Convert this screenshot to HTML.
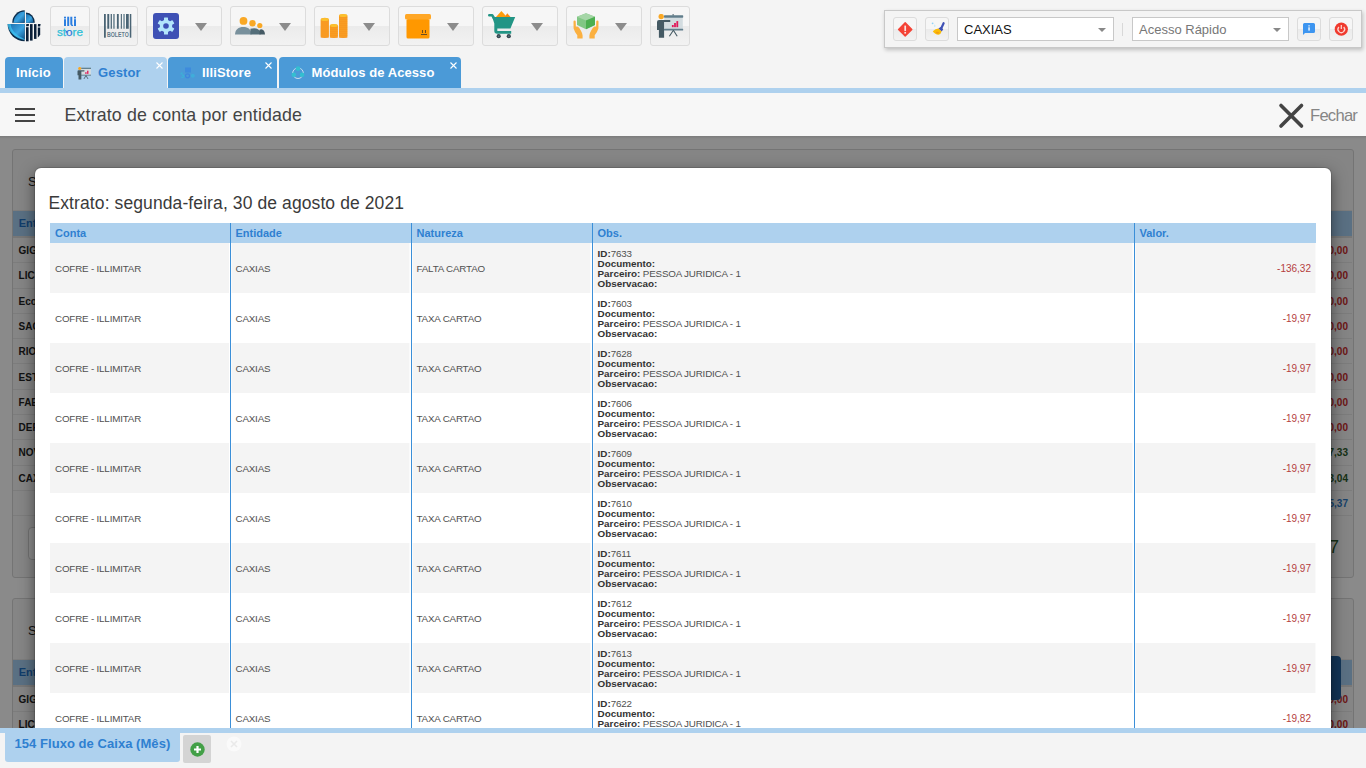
<!DOCTYPE html>
<html><head><meta charset="utf-8">
<style>
*{box-sizing:border-box;margin:0;padding:0}
html,body{width:1366px;height:768px;overflow:hidden;background:#f4f4f4;font-family:"Liberation Sans",sans-serif;position:relative}
.abs{position:absolute}
.btn{position:absolute;top:6px;height:39.5px;border:1px solid #dcdcdc;border-radius:3px;background:linear-gradient(#f6f6f6 0,#f6f6f6 19.5px,#ebebeb 19.5px,#f2f2f2 100%)}
.tri{position:absolute;top:15.5px;width:0;height:0;border-left:6px solid transparent;border-right:6px solid transparent;border-top:8px solid #8c8c8c}
.tab{position:absolute;top:57px;height:31px;border-radius:4px 4px 0 0;background:#4b9ad7;color:#fff;font-weight:bold;font-size:13px}
.tab span{position:absolute;top:8px;white-space:nowrap;letter-spacing:0.15px}
.tab .x{position:absolute;line-height:0}
#bar{position:absolute;left:0;top:88px;width:1366px;height:5px;background:#aed1ee}
#hdr{position:absolute;left:0;top:93px;width:1366px;height:43px;background:#f7f7f7}
#content{position:absolute;left:0;top:136px;width:1366px;height:592px;background:#fcfcfc;overflow:hidden}
#overlay{position:absolute;left:0;top:0;width:1366px;height:592px;background:rgba(0,0,0,.45)}
#modal{position:absolute;left:35px;top:32px;width:1296px;height:620px;background:#fff;border-radius:6px;box-shadow:0 0 0 1px rgba(0,0,0,.12),0 5px 15px rgba(0,0,0,.5)}
table{border-collapse:collapse;position:absolute;left:15px;top:55px;width:1266px;table-layout:fixed}
th{background:#aed1ee;color:#2f80d1;font-size:11px;font-weight:bold;text-align:left;height:20px;padding:0 5px;border-left:1px solid #3b8fd8}
th:first-child,td:first-child{border-left:none}
td{height:50px;font-size:9.8px;letter-spacing:-0.18px;color:#505050;padding:1px 5px 0 5px;border-left:1px solid #3b8fd8;vertical-align:middle;white-space:nowrap}
tbody tr:nth-child(odd) td{background:linear-gradient(to right,#fff 0,#fff 1px,#f4f4f4 1px,#f4f4f4 calc(100% - 1px),#fff calc(100% - 1px))}
tbody tr:nth-child(odd) td:first-child{background:linear-gradient(to right,#f4f4f4 0,#f4f4f4 calc(100% - 1px),#fff calc(100% - 1px))}
tbody tr:nth-child(odd) td:last-child{background:linear-gradient(to right,#fff 0,#fff 1px,#f4f4f4 1px)}
tbody tr:nth-child(even) td{background:#fff}
td.v{text-align:right;color:#b53e3e;font-size:10px;letter-spacing:0}
td.o{line-height:10px}
td.o b{font-weight:bold;font-size:9.9px;letter-spacing:0;color:#333}
#bot{position:absolute;left:0;top:728px;width:1366px;height:40px;background:#f4f4f4}
.sbtn{background:linear-gradient(#f6f6f6 0,#f6f6f6 11px,#ebebeb 11px,#f2f2f2 100%)!important}
</style></head><body>

<!-- logo -->
<svg class="abs" style="left:0;top:0" width="48" height="48" viewBox="0 0 48 48">
<defs><linearGradient id="lg" x1="0" y1="0" x2="1" y2="1"><stop offset="0" stop-color="#1c6fae"/><stop offset="0.55" stop-color="#3aa3e0"/><stop offset="1" stop-color="#0f4f86"/></linearGradient></defs>
<path d="M24.7 22.8 V10.2 A12.6 12.6 0 0 0 12.2 22.8 Z" fill="#0b2c4a"/>
<path d="M24.7 22.8 V11.6 A11.2 11.2 0 0 0 13.6 22.8 Z" fill="url(#lg)"/>
<path d="M26 22.8 V12.6 A8.8 10.2 0 0 1 34.8 22.8 Z" fill="#0b2c4a"/>
<path d="M26 22.8 V14 A7.6 8.8 0 0 1 33.5 22.8 Z" fill="url(#lg)"/>
<path d="M24.7 23.9 H7.6 A17.1 17.4 0 0 0 24.7 41.3 Z" fill="#0b2c4a"/>
<path d="M24.7 23.9 H9.6 A15.1 15.8 0 0 0 24.7 39.6 Z" fill="url(#lg)"/>
<path d="M7.6 23.9 H10.5 Q11 33 24.7 39.2 V40 Q9 36 7.6 23.9Z" fill="#3cc0f0" opacity="0.8"/>
<g fill="#0a1f38">
<path d="M26 27.2 H28.6 V41.3 H26Z"/><path d="M26.3 24.1 H29 L28.7 26.3 H26Z"/>
<path d="M30 24.1 H32.6 V40.6 H30Z"/>
<path d="M34 24.1 H36.5 V38.9 H34Z"/>
<path d="M37.8 27.6 H40.2 V34.5 Q39.1 36.6 37.8 37.4Z"/><path d="M38 24.1 H40.6 L40.2 26.5 H37.8Z"/>
</g>
</svg>

<!-- toolbar buttons -->
<div class="btn" style="left:50px;width:40px">
 <svg class="abs" style="left:-1px;top:-1px" width="40" height="39" viewBox="0 0 40 39">
  <g fill="#2d7fe0"><rect x="14" y="13.2" width="2" height="6.8"/><rect x="14" y="10.7" width="2" height="1.8"/><rect x="17.2" y="10.7" width="2" height="9.3"/><path d="M20.3 10.7 h2 v7.5 q0 0.8 0.8 0.8 v1 q-2.8 0-2.8-2.3z"/><rect x="24" y="13.2" width="2" height="6.8"/><rect x="24" y="10.7" width="2" height="1.8"/></g>
  <text x="20" y="29.6" font-family="Liberation Sans" font-size="11" fill="#2ec0d8" text-anchor="middle" textLength="26" lengthAdjust="spacingAndGlyphs" stroke="#2ec0d8" stroke-width="0.25">st<tspan fill="#2f78dc" stroke="#2f78dc">o</tspan>re</text>
  <circle cx="16.3" cy="25.8" r="0.9" fill="#2f6fd8"/>
 </svg>
</div>
<div class="btn" style="left:98px;width:40px">
 <svg class="abs" style="left:5px;top:7px" width="28" height="25" viewBox="0 0 28 25">
 <rect x="0" y="0" width="1.8" height="23.7" fill="#4a6474"/><rect x="25.8" y="0" width="1.5" height="23.7" fill="#4a6474"/><rect x="3.3" y="0" width="1.70" height="14.75" fill="#4a6474"/><rect x="5.4" y="0" width="1.00" height="14.75" fill="#a9bac3"/><rect x="6.8" y="0" width="1.10" height="14.75" fill="#4a6474"/><rect x="9.1" y="0" width="1.70" height="14.75" fill="#7c919c"/><rect x="12.9" y="0" width="1.85" height="14.75" fill="#4a6474"/><rect x="16.8" y="0" width="1.10" height="14.75" fill="#4a6474"/><rect x="19.1" y="0" width="1.90" height="14.75" fill="#8ea2ac"/><rect x="22" y="0" width="2.75" height="14.75" fill="#4a6474"/>
 <text x="3" y="22.7" font-family="Liberation Sans" font-weight="bold" font-size="6.4" fill="#60798a" textLength="21.7" lengthAdjust="spacingAndGlyphs">BOLETO</text>
 </svg>
</div>
<div class="btn" style="left:146px;width:76px">
 <svg class="abs" style="left:6px;top:6px" width="27" height="27" viewBox="0 0 27 27">
 <rect x="0" y="0" width="26" height="26" rx="3" fill="#3f51b5"/>
 <g transform="translate(13 13)" fill="#b3e5fc">
  <circle r="6.2"/>
  <rect x="-2" y="-8.5" width="4" height="17" rx="0.5"/>
  <rect x="-2" y="-8.5" width="4" height="17" rx="0.5" transform="rotate(60)"/>
  <rect x="-2" y="-8.5" width="4" height="17" rx="0.5" transform="rotate(120)"/>
  <circle r="2.8" fill="#3f51b5"/>
 </g>
 </svg>
 <div class="tri" style="left:48px"></div>
</div>
<div class="btn" style="left:230px;width:76px">
 <svg class="abs" style="left:4px;top:10px" width="32" height="19" viewBox="0 0 32 19">
  <circle cx="8.5" cy="3.9" r="3.9" fill="#f9a825"/>
  <circle cx="17.5" cy="6.2" r="3.2" fill="#f9a825"/>
  <circle cx="24.8" cy="8.5" r="2.6" fill="#f9a825"/>
  <path d="M0 17.6 C0 12.5 3.5 9.9 8.3 9.9 C13 9.9 16.3 12.3 16.6 17.6Z" fill="#78909c"/>
  <path d="M15.4 17.6 V11.8 Q17 11.2 19.2 11.2 Q23.6 11.4 25.6 15 V17.6Z" fill="#546e7a"/>
  <path d="M24.5 17.6 V12.8 Q25.5 12.3 26.3 12.3 Q29.6 12.6 30 17.6Z" fill="#455a64"/>
 </svg>
 <div class="tri" style="left:48px"></div>
</div>
<div class="btn" style="left:314px;width:76px">
 <svg class="abs" style="left:5px;top:6px" width="30" height="27" viewBox="0 0 30 27"><rect x="0.7" y="4.8" width="8.200000000000001" height="20.099999999999998" rx="4.1000000000000005" ry="1.6" fill="#fbab2a"/><path d="M0.7 8.0h8.2M0.7 10.0h8.2M0.7 12.0h8.2M0.7 14.0h8.2M0.7 16.0h8.2M0.7 18.0h8.2M0.7 20.0h8.2M0.7 22.0h8.2M0.7 24.0h8.2" stroke="#f5871a" stroke-width="0.9"/><ellipse cx="4.8" cy="6.4" rx="3.8000000000000007" ry="1.5" fill="#fbc02d"/><rect x="9.9" y="10.9" width="7.999999999999998" height="13.999999999999998" rx="3.999999999999999" ry="1.6" fill="#fbab2a"/><path d="M9.9 14.1h8.0M9.9 16.1h8.0M9.9 18.1h8.0M9.9 20.1h8.0M9.9 22.1h8.0M9.9 24.1h8.0" stroke="#f5871a" stroke-width="0.9"/><ellipse cx="13.899999999999999" cy="12.5" rx="3.6999999999999993" ry="1.5" fill="#fbc02d"/><rect x="19" y="0.9" width="8.399999999999999" height="24.0" rx="4.199999999999999" ry="1.6" fill="#fbab2a"/><path d="M19 4.1h8.4M19 6.1h8.4M19 8.1h8.4M19 10.1h8.4M19 12.1h8.4M19 14.1h8.4M19 16.1h8.4M19 18.1h8.4M19 20.1h8.4M19 22.1h8.4M19 24.1h8.4" stroke="#f5871a" stroke-width="0.9"/><ellipse cx="23.2" cy="2.5" rx="3.8999999999999995" ry="1.5" fill="#fbc02d"/></svg>
 <div class="tri" style="left:48px"></div>
</div>
<div class="btn" style="left:398px;width:76px">
 <svg class="abs" style="left:6px;top:7px" width="27" height="26" viewBox="0 0 27 26">
  <rect x="1.5" y="5" width="23" height="19.5" rx="1.5" fill="#ff9800"/>
  <rect x="0" y="0" width="26" height="5.5" rx="1.5" fill="#ffa726"/>
  <path d="M16 20.5h6M17.5 19v-3M20.5 19v-3" stroke="#6d4c1f" stroke-width="1"/>
 </svg>
 <div class="tri" style="left:48px"></div>
</div>
<div class="btn" style="left:482px;width:76px">
 <svg class="abs" style="left:5px;top:4px" width="29" height="29" viewBox="0 0 29 29">
  <path d="M8 5.95 L13.4 0 L17.3 4.3 L17.3 5.95Z" fill="#ff9d0a"/>
  <path d="M16.6 5.95 L19.3 2.3 L22.5 5.95Z" fill="#f98a0c"/>
  <path d="M1.3 4.3 H4.3 L6.2 7.5" stroke="#229585" stroke-width="2.6" stroke-linecap="round" stroke-linejoin="round" fill="none"/>
  <path d="M4.2 5.9 H27.2 L22.4 17.6 H9.3 V20 H23.2 V22.8 H9.3 Q6.3 22.8 6.3 20 V12.5 Z" fill="#229585"/>
  <circle cx="10.7" cy="25.2" r="2.1" fill="#37474f"/><circle cx="20.8" cy="25.2" r="2.1" fill="#37474f"/>
  <circle cx="10.7" cy="25.2" r="0.7" fill="#607d8b"/><circle cx="20.8" cy="25.2" r="0.7" fill="#607d8b"/>
 </svg>
 <div class="tri" style="left:48px"></div>
</div>
<div class="btn" style="left:566px;width:76px">
 <svg class="abs" style="left:6px;top:6px" width="27" height="27" viewBox="0 0 27 27">
  <path d="M13 0.3 L22 3.8 V12 L13 16.3 L4 12 V3.8Z" fill="#81c784"/>
  <path d="M13 0.3 L22 3.8 L13 7.5 L4 3.8Z" fill="#a5d6a7"/>
  <path d="M13 7.5 L22 3.8 V12 L13 16.3Z" fill="#4caf50"/>
  <path d="M0.5 8.5 Q0.5 7.5 1.6 7.5 Q2.7 7.5 2.7 8.5 L2.9 13.8 Q4 13 5 13.8 Q6.5 15 7.8 17.5 Q9.6 20.5 9.6 22.5 V25.6 H4.3 V22.2 Q1.5 18.8 0.6 15.5 Z" fill="#fbb040"/>
  <path d="M 25.50 8.5 Q 25.50 7.5 24.40 7.5 Q 23.30 7.5 23.30 8.5 L 23.10 13.8 Q 22.00 13 21.00 13.8 Q 19.50 15 18.20 17.5 Q 16.40 20.5 16.40 22.5 V 25.6 H 21.70 V 22.2 Q 24.50 18.8 25.40 15.5 Z" fill="#fbb040"/>
 </svg>
 <div class="tri" style="left:48px"></div>
</div>
<div class="btn" style="left:650px;width:40px">
 <svg class="abs" style="left:5px;top:7px" width="28" height="25" viewBox="0 0 28 25">
  <rect x="16.6" y="-0.2" width="1" height="2" fill="#455a64"/>
  <rect x="8.2" y="3.6" width="18.6" height="11.6" fill="#d3dce0"/>
  <rect x="8" y="1.3" width="19.2" height="2.4" rx="0.6" fill="#607d8b"/>
  <rect x="8" y="14.8" width="19.2" height="1.8" rx="0.6" fill="#607d8b"/>
  <path d="M17.4 16.3 L13.4 22.3 M17.4 16.3 L21.2 22.3" stroke="#455a64" stroke-width="1.1"/>
  <rect x="15.9" y="11" width="1.8" height="2.2" fill="#e0195a"/><rect x="18.1" y="9" width="1.8" height="4.2" fill="#e0195a"/><rect x="20.4" y="7.1" width="1.8" height="6.1" fill="#e0195a"/>
  <circle cx="5.2" cy="2.6" r="2.7" fill="#f9a825"/>
  <path d="M1 8 Q1 6 3 6 H14 Q15 7 14 8.1 H8.1 V23.8 H2.9 V16 H1Z" fill="#455a64"/>
 </svg>
</div>

<!-- right panel -->
<div class="abs" style="left:884px;top:10px;width:478px;height:38px;background:#f4f4f4;border:1px solid #c8c8c8;box-shadow:1px 2px 4px rgba(0,0,0,.22)">
 <div class="btn sbtn" style="left:8px;top:6px;width:23.5px;height:23.5px">
  <svg class="abs" style="left:3px;top:3px" width="16" height="16" viewBox="0 0 16 16"><path d="M8.2 1.8 L14.8 8.4 L8.2 15 L1.6 8.4Z" fill="#f44336" stroke="#f44336" stroke-width="1.4" stroke-linejoin="round"/><rect x="7.35" y="4.6" width="1.7" height="5.4" fill="#fbe3e1"/><rect x="7.35" y="10.9" width="1.7" height="1.7" fill="#fbe3e1"/></svg>
 </div>
 <div class="btn sbtn" style="left:40px;top:6px;width:23.5px;height:23.5px">
  <svg class="abs" style="left:3px;top:3px" width="16" height="16" viewBox="0 0 16 16"><path d="M14.6 2.2 L12.4 7" stroke="#3f51b5" stroke-width="2.2" stroke-linecap="round"/><path d="M9.3 7.6 L12.2 5.8 L14.2 8.4 L12.6 10.6 Z" fill="#3f51b5"/><path d="M3.8 10.2 Q6.5 8 9.3 7.6 L12.6 10.6 Q12 13 9.5 13.8 Q6 13.6 3.8 10.2Z" fill="#fbbc05"/><path d="M6.5 11 Q8.8 10 10.5 11.8 Q9.5 13 8 12.8Z" fill="#f39c12"/><circle cx="3.6" cy="2.3" r="0.9" fill="#8fd3f8"/><path d="M5.8 3.3 Q7.2 5.3 5.8 6.2 Q4.6 5.3 5.8 3.3Z" fill="#b3e5fc"/></svg>
 </div>
 <div class="abs" style="left:72px;top:6px;width:157px;height:24px;background:#fff;border:1px solid #c8c8c8">
  <span class="abs" style="left:6px;top:4px;font-size:13px;color:#111">CAXIAS</span>
  <div class="abs" style="left:140px;top:10px;border-left:4.5px solid transparent;border-right:4.5px solid transparent;border-top:4px solid #888"></div>
 </div>
 <div class="abs" style="left:237px;top:12px;width:1px;height:13px;background:#d8d8d8"></div>
 <div class="abs" style="left:247px;top:6px;width:157px;height:24px;background:#fff;border:1px solid #c8c8c8">
  <span class="abs" style="left:6px;top:4px;font-size:13px;color:#777">Acesso Rápido</span>
  <div class="abs" style="left:140px;top:10px;border-left:4.5px solid transparent;border-right:4.5px solid transparent;border-top:4px solid #888"></div>
 </div>
 <div class="btn sbtn" style="left:412px;top:6px;width:23.5px;height:23.5px">
  <svg class="abs" style="left:4px;top:4px" width="14" height="15" viewBox="0 0 14 15"><path d="M2.5 1 H11.5 Q13 1 13 2.5 V9.5 Q13 11 11.5 11 H3 L1 13 V2.5 Q1 1 2.5 1Z" fill="#3d95f0"/><rect x="6.2" y="5.3" width="1.7" height="3.3" fill="#d6e9fb"/><rect x="6.2" y="3" width="1.7" height="1.6" fill="#a9cff5"/></svg>
 </div>
 <div class="btn sbtn" style="left:444px;top:6px;width:23.5px;height:23.5px">
  <svg class="abs" style="left:3px;top:3px" width="16" height="16" viewBox="0 0 16 16"><circle cx="8.3" cy="8.2" r="6.6" fill="#f03a2e"/><path d="M5.9 6 A3.3 3.3 0 1 0 10.7 6" stroke="#fbd3cf" stroke-width="1.3" fill="none"/><rect x="7.65" y="4" width="1.3" height="4" fill="#fbd3cf"/></svg>
 </div>
</div>

<!-- tabs -->
<div class="tab" style="left:5px;width:58px"><span style="left:11px">Início</span></div>
<div class="tab" style="left:64px;width:103px;background:#aed1ee;color:#2f80d1">
 <svg class="abs" style="left:12.5px;top:9.5px" width="14.5" height="13" viewBox="0 0 28 25">
  <rect x="8.2" y="3.6" width="18.6" height="11.6" fill="#d3dce0"/>
  <rect x="8" y="1.3" width="19.2" height="2.4" fill="#607d8b"/>
  <rect x="8" y="14.8" width="19.2" height="1.8" fill="#607d8b"/>
  <path d="M17.4 16.3 L13.4 23 M17.4 16.3 L21.2 23" stroke="#455a64" stroke-width="1.6"/>
  <rect x="15.9" y="10" width="2.6" height="3.2" fill="#e0195a"/><rect x="19.5" y="7.1" width="2.6" height="6.1" fill="#e0195a"/>
  <circle cx="5.2" cy="2.9" r="3" fill="#f9a825"/>
  <path d="M1 8 Q1 6 3 6 H14 Q15 7 14 8.4 H8.4 V24 H2.9 V16 H1Z" fill="#455a64"/>
 </svg>
 <span style="left:34px">Gestor</span><div class="x" style="left:91.5px;top:4.6px"><svg width="7" height="7" viewBox="0 0 7 7"><path d="M0.5 0.5 L6.5 6.5 M6.5 0.5 L0.5 6.5" stroke="#fff" stroke-width="1.1"/></svg></div>
</div>
<div class="tab" style="left:168px;width:109px">
 <svg class="abs" style="left:12px;top:10px;opacity:.75" width="16" height="12" viewBox="0 0 16 12"><rect x="5" y="0.5" width="6" height="5" fill="#3a86e0"/><path d="M1 7.5 Q1 6 2.5 6 M1 10 Q3 11 4 9.5 Q4 8 2 8" stroke="#38b8d8" stroke-width="1.3" fill="none"/><circle cx="7.5" cy="8.8" r="2" fill="none" stroke="#3a80e0" stroke-width="1.2"/><circle cx="12.8" cy="8.8" r="2" fill="#3cb4dc"/></svg>
 <span style="left:34px">IlliStore</span><div class="x" style="left:97px;top:4.6px"><svg width="7" height="7" viewBox="0 0 7 7"><path d="M0.5 0.5 L6.5 6.5 M6.5 0.5 L0.5 6.5" stroke="#fff" stroke-width="1.1"/></svg></div>
</div>
<div class="tab" style="left:279px;width:182px">
 <svg class="abs" style="left:12px;top:9px" width="14" height="14" viewBox="0 0 14 14"><circle cx="7" cy="7.2" r="5.3" fill="none" stroke="#dfeaf3" stroke-width="1" opacity="0.85"/><circle cx="7" cy="2.6" r="2.3" fill="#33bfd0"/><circle cx="2.8" cy="8.7" r="2.3" fill="#33bfd0"/><circle cx="11.1" cy="8.7" r="2.3" fill="#33bfd0"/></svg>
 <span style="left:32.5px;letter-spacing:0.08px">Módulos de Acesso</span><div class="x" style="left:170.5px;top:5px"><svg width="7" height="7" viewBox="0 0 7 7"><path d="M0.5 0.5 L6.5 6.5 M6.5 0.5 L0.5 6.5" stroke="#fff" stroke-width="1.1"/></svg></div>
</div>

<div id="bar"></div>
<div id="hdr">
 <div class="abs" style="left:15px;top:15px;width:20px;height:2px;background:#444"></div>
 <div class="abs" style="left:15px;top:21px;width:20px;height:2px;background:#444"></div>
 <div class="abs" style="left:15px;top:27px;width:20px;height:2px;background:#444"></div>
 <div class="abs" style="left:64.5px;top:12px;font-size:17.8px;letter-spacing:0.15px;color:#444;white-space:nowrap">Extrato de conta por entidade</div>
 <svg class="abs" style="left:1278px;top:9px" width="27" height="27" viewBox="0 0 27 27"><path d="M3 3.5 L23.5 24 M23.5 3.5 L3 24" stroke="#444" stroke-width="3.6" stroke-linecap="round"/></svg>
 <div class="abs" style="left:1310px;top:13px;font-size:16.6px;letter-spacing:-0.75px;color:#858585;white-space:nowrap">Fechar</div>
</div>

<div id="content">
 <!-- bg start -->
<div class="abs" style="left:12px;top:13px;width:1342px;height:429px;background:#f3f3f3;border:1px solid #d4d4d4;border-radius:3px"></div>
<div class="abs" style="left:12px;top:462.20000000000005px;width:1342px;height:181.79999999999995px;background:#f3f3f3;border:1px solid #d4d4d4;border-radius:3px"></div>
<div class="abs" style="left:28px;top:39.20px;font-size:13px;line-height:1;color:#222;white-space:nowrap;">S</div>
<div class="abs" style="left:28px;top:488.00px;font-size:13px;line-height:1;color:#222;white-space:nowrap;">S</div>
<div class="abs" style="left:13px;top:74.00px;width:1339px;height:1.00px;background:#e4e4e4;"></div>
<div class="abs" style="left:13px;top:75.00px;width:1339px;height:25.00px;background:#a4cdef;"></div>
<div class="abs" style="left:13px;top:100.00px;width:1339px;height:1.50px;background:#d9d9d9;"></div>
<div class="abs" style="left:18.7px;top:81.59px;font-size:11px;line-height:1;font-weight:bold;color:#1f6fc4;white-space:nowrap;">Ent</div>
<div class="abs" style="left:13px;top:523.00px;width:1339px;height:1.00px;background:#e4e4e4;"></div>
<div class="abs" style="left:13px;top:524.00px;width:1339px;height:25.00px;background:#a4cdef;"></div>
<div class="abs" style="left:13px;top:549.00px;width:1339px;height:1.50px;background:#d9d9d9;"></div>
<div class="abs" style="left:18.7px;top:530.59px;font-size:11px;line-height:1;font-weight:bold;color:#1f6fc4;white-space:nowrap;">Ent</div>
<div class="abs" style="left:13px;top:126.20px;width:1339px;height:1.00px;background:#e2e2e2;"></div>
<div class="abs" style="left:18.6px;top:110.03px;font-size:10px;line-height:1;font-weight:bold;color:#222;white-space:nowrap;">GIG</div>
<div class="abs" style="right:18px;top:110.03px;font-size:10px;line-height:1;font-weight:bold;color:#c42a2a;white-space:nowrap;">0,00</div>
<div class="abs" style="left:13px;top:151.50px;width:1339px;height:1.00px;background:#e2e2e2;"></div>
<div class="abs" style="left:18.6px;top:135.34px;font-size:10px;line-height:1;font-weight:bold;color:#222;white-space:nowrap;">LIC</div>
<div class="abs" style="right:18px;top:135.34px;font-size:10px;line-height:1;font-weight:bold;color:#c42a2a;white-space:nowrap;">0,00</div>
<div class="abs" style="left:13px;top:176.80px;width:1339px;height:1.00px;background:#e2e2e2;"></div>
<div class="abs" style="left:18.6px;top:160.64px;font-size:10px;line-height:1;font-weight:bold;color:#222;white-space:nowrap;">Eco</div>
<div class="abs" style="right:18px;top:160.64px;font-size:10px;line-height:1;font-weight:bold;color:#c42a2a;white-space:nowrap;">0,00</div>
<div class="abs" style="left:13px;top:202.10px;width:1339px;height:1.00px;background:#e2e2e2;"></div>
<div class="abs" style="left:18.6px;top:185.94px;font-size:10px;line-height:1;font-weight:bold;color:#222;white-space:nowrap;">SAC</div>
<div class="abs" style="right:18px;top:185.94px;font-size:10px;line-height:1;font-weight:bold;color:#c42a2a;white-space:nowrap;">0,00</div>
<div class="abs" style="left:13px;top:227.40px;width:1339px;height:1.00px;background:#e2e2e2;"></div>
<div class="abs" style="left:18.6px;top:211.24px;font-size:10px;line-height:1;font-weight:bold;color:#222;white-space:nowrap;">RIO</div>
<div class="abs" style="right:18px;top:211.24px;font-size:10px;line-height:1;font-weight:bold;color:#c42a2a;white-space:nowrap;">0,00</div>
<div class="abs" style="left:13px;top:252.70px;width:1339px;height:1.00px;background:#e2e2e2;"></div>
<div class="abs" style="left:18.6px;top:236.54px;font-size:10px;line-height:1;font-weight:bold;color:#222;white-space:nowrap;">EST</div>
<div class="abs" style="right:18px;top:236.54px;font-size:10px;line-height:1;font-weight:bold;color:#c42a2a;white-space:nowrap;">0,00</div>
<div class="abs" style="left:13px;top:278.00px;width:1339px;height:1.00px;background:#e2e2e2;"></div>
<div class="abs" style="left:18.6px;top:261.84px;font-size:10px;line-height:1;font-weight:bold;color:#222;white-space:nowrap;">FAE</div>
<div class="abs" style="right:18px;top:261.84px;font-size:10px;line-height:1;font-weight:bold;color:#c42a2a;white-space:nowrap;">0,00</div>
<div class="abs" style="left:13px;top:303.30px;width:1339px;height:1.00px;background:#e2e2e2;"></div>
<div class="abs" style="left:18.6px;top:287.13px;font-size:10px;line-height:1;font-weight:bold;color:#222;white-space:nowrap;">DEF</div>
<div class="abs" style="right:18px;top:287.13px;font-size:10px;line-height:1;font-weight:bold;color:#c42a2a;white-space:nowrap;">0,00</div>
<div class="abs" style="left:13px;top:328.60px;width:1339px;height:1.00px;background:#e2e2e2;"></div>
<div class="abs" style="left:18.6px;top:312.44px;font-size:10px;line-height:1;font-weight:bold;color:#222;white-space:nowrap;">NOV</div>
<div class="abs" style="right:18px;top:312.44px;font-size:10px;line-height:1;font-weight:bold;color:#2a5a2a;white-space:nowrap;">7,33</div>
<div class="abs" style="left:13px;top:353.90px;width:1339px;height:1.00px;background:#e2e2e2;"></div>
<div class="abs" style="left:18.6px;top:337.74px;font-size:10px;line-height:1;font-weight:bold;color:#222;white-space:nowrap;">CAX</div>
<div class="abs" style="right:18px;top:337.74px;font-size:10px;line-height:1;font-weight:bold;color:#2a5a2a;white-space:nowrap;">3,04</div>
<div class="abs" style="left:13px;top:379.20px;width:1339px;height:1.00px;background:#e2e2e2;"></div>
<div class="abs" style="right:18px;top:363.04px;font-size:10px;line-height:1;font-weight:bold;color:#2d79c2;white-space:nowrap;">5,37</div>
<div class="abs" style="left:13px;top:574.70px;width:1339px;height:1.00px;background:#e2e2e2;"></div>
<div class="abs" style="left:18.6px;top:558.53px;font-size:10px;line-height:1;font-weight:bold;color:#222;white-space:nowrap;">GIG</div>
<div class="abs" style="right:18px;top:558.53px;font-size:10px;line-height:1;font-weight:bold;color:#c42a2a;white-space:nowrap;">0,00</div>
<div class="abs" style="left:13px;top:600.00px;width:1339px;height:1.00px;background:#e2e2e2;"></div>
<div class="abs" style="left:18.6px;top:583.83px;font-size:10px;line-height:1;font-weight:bold;color:#222;white-space:nowrap;">LIC</div>
<div class="abs" style="right:18px;top:583.83px;font-size:10px;line-height:1;font-weight:bold;color:#c42a2a;white-space:nowrap;">0,00</div>
<div class="abs" style="left:28px;top:391.00px;width:200px;height:33.00px;background:#fff;border:1px solid #cfcfcf;border-radius:4px"></div>
<div class="abs" style="left:1329px;top:402.06px;font-size:18px;line-height:1;color:#2a5a2a;white-space:nowrap;">7</div>
<div class="abs" style="left:1300px;top:520.00px;width:41px;height:44.00px;background:#22629f;border-radius:4px"></div>
<!-- bg end -->
 <div id="overlay"></div>
 <div class="abs" style="left:0;top:0;width:1366px;height:3px;background:linear-gradient(rgba(0,0,0,.1),rgba(0,0,0,0))"></div>
 <div id="modal">
  <div class="abs" style="left:13.5px;top:25px;font-size:17.5px;letter-spacing:0.1px;color:#3a3a3a;white-space:nowrap">Extrato: segunda-feira, 30 de agosto de 2021</div>
  <table>
   <colgroup><col style="width:180px"><col style="width:181px"><col style="width:181px"><col style="width:542px"><col style="width:182px"></colgroup>
   <thead><tr><th>Conta</th><th>Entidade</th><th>Natureza</th><th>Obs.</th><th>Valor.</th></tr></thead>
   <tbody id="tb">
<tr><td>COFRE - ILLIMITAR</td><td>CAXIAS</td><td>FALTA CARTAO</td><td class="o"><b>ID:</b>7633<br><b>Documento:</b><br><b>Parceiro:</b> PESSOA JURIDICA - 1<br><b>Observacao:</b></td><td class="v">-136,32</td></tr>
<tr><td>COFRE - ILLIMITAR</td><td>CAXIAS</td><td>TAXA CARTAO</td><td class="o"><b>ID:</b>7603<br><b>Documento:</b><br><b>Parceiro:</b> PESSOA JURIDICA - 1<br><b>Observacao:</b></td><td class="v">-19,97</td></tr>
<tr><td>COFRE - ILLIMITAR</td><td>CAXIAS</td><td>TAXA CARTAO</td><td class="o"><b>ID:</b>7628<br><b>Documento:</b><br><b>Parceiro:</b> PESSOA JURIDICA - 1<br><b>Observacao:</b></td><td class="v">-19,97</td></tr>
<tr><td>COFRE - ILLIMITAR</td><td>CAXIAS</td><td>TAXA CARTAO</td><td class="o"><b>ID:</b>7606<br><b>Documento:</b><br><b>Parceiro:</b> PESSOA JURIDICA - 1<br><b>Observacao:</b></td><td class="v">-19,97</td></tr>
<tr><td>COFRE - ILLIMITAR</td><td>CAXIAS</td><td>TAXA CARTAO</td><td class="o"><b>ID:</b>7609<br><b>Documento:</b><br><b>Parceiro:</b> PESSOA JURIDICA - 1<br><b>Observacao:</b></td><td class="v">-19,97</td></tr>
<tr><td>COFRE - ILLIMITAR</td><td>CAXIAS</td><td>TAXA CARTAO</td><td class="o"><b>ID:</b>7610<br><b>Documento:</b><br><b>Parceiro:</b> PESSOA JURIDICA - 1<br><b>Observacao:</b></td><td class="v">-19,97</td></tr>
<tr><td>COFRE - ILLIMITAR</td><td>CAXIAS</td><td>TAXA CARTAO</td><td class="o"><b>ID:</b>7611<br><b>Documento:</b><br><b>Parceiro:</b> PESSOA JURIDICA - 1<br><b>Observacao:</b></td><td class="v">-19,97</td></tr>
<tr><td>COFRE - ILLIMITAR</td><td>CAXIAS</td><td>TAXA CARTAO</td><td class="o"><b>ID:</b>7612<br><b>Documento:</b><br><b>Parceiro:</b> PESSOA JURIDICA - 1<br><b>Observacao:</b></td><td class="v">-19,97</td></tr>
<tr><td>COFRE - ILLIMITAR</td><td>CAXIAS</td><td>TAXA CARTAO</td><td class="o"><b>ID:</b>7613<br><b>Documento:</b><br><b>Parceiro:</b> PESSOA JURIDICA - 1<br><b>Observacao:</b></td><td class="v">-19,97</td></tr>
<tr><td>COFRE - ILLIMITAR</td><td>CAXIAS</td><td>TAXA CARTAO</td><td class="o"><b>ID:</b>7622<br><b>Documento:</b><br><b>Parceiro:</b> PESSOA JURIDICA - 1<br><b>Observacao:</b></td><td class="v">-19,82</td></tr>
</tbody>
  </table>
 </div>
</div>

<div class="abs" style="left:0;top:728px;width:1366px;height:5px;background:#aed1ee"></div>
<div class="abs" style="left:0;top:733px;width:1366px;height:35px;background:#f4f4f4">
 <div class="abs" style="left:5px;top:0;width:175px;height:29px;background:#aed1ee;border-radius:0 0 3px 3px">
  <span class="abs" style="left:9.5px;top:3px;font-size:13px;letter-spacing:0.05px;font-weight:bold;color:#2f80d1;white-space:nowrap">154 Fluxo de Caixa (Mês)</span>
 </div>
 <div class="abs" style="left:183px;top:2px;width:28px;height:28px;background:#d4d4d4;border-radius:2px">
  <svg class="abs" style="left:6.5px;top:6.6px" width="15" height="15" viewBox="0 0 15 15"><circle cx="7.5" cy="7.5" r="7.2" fill="#43a047"/><path d="M7.5 4 V11 M4 7.5 H11" stroke="#fff" stroke-width="2.2"/></svg>
 </div>
 <svg class="abs" style="left:226px;top:3px" width="16" height="16" viewBox="0 0 16 16"><circle cx="8" cy="8" r="7.5" fill="#fafafa"/><path d="M5 5 L11 11 M11 5 L5 11" stroke="#eaeaea" stroke-width="1.6"/></svg>
</div>

</body></html>
